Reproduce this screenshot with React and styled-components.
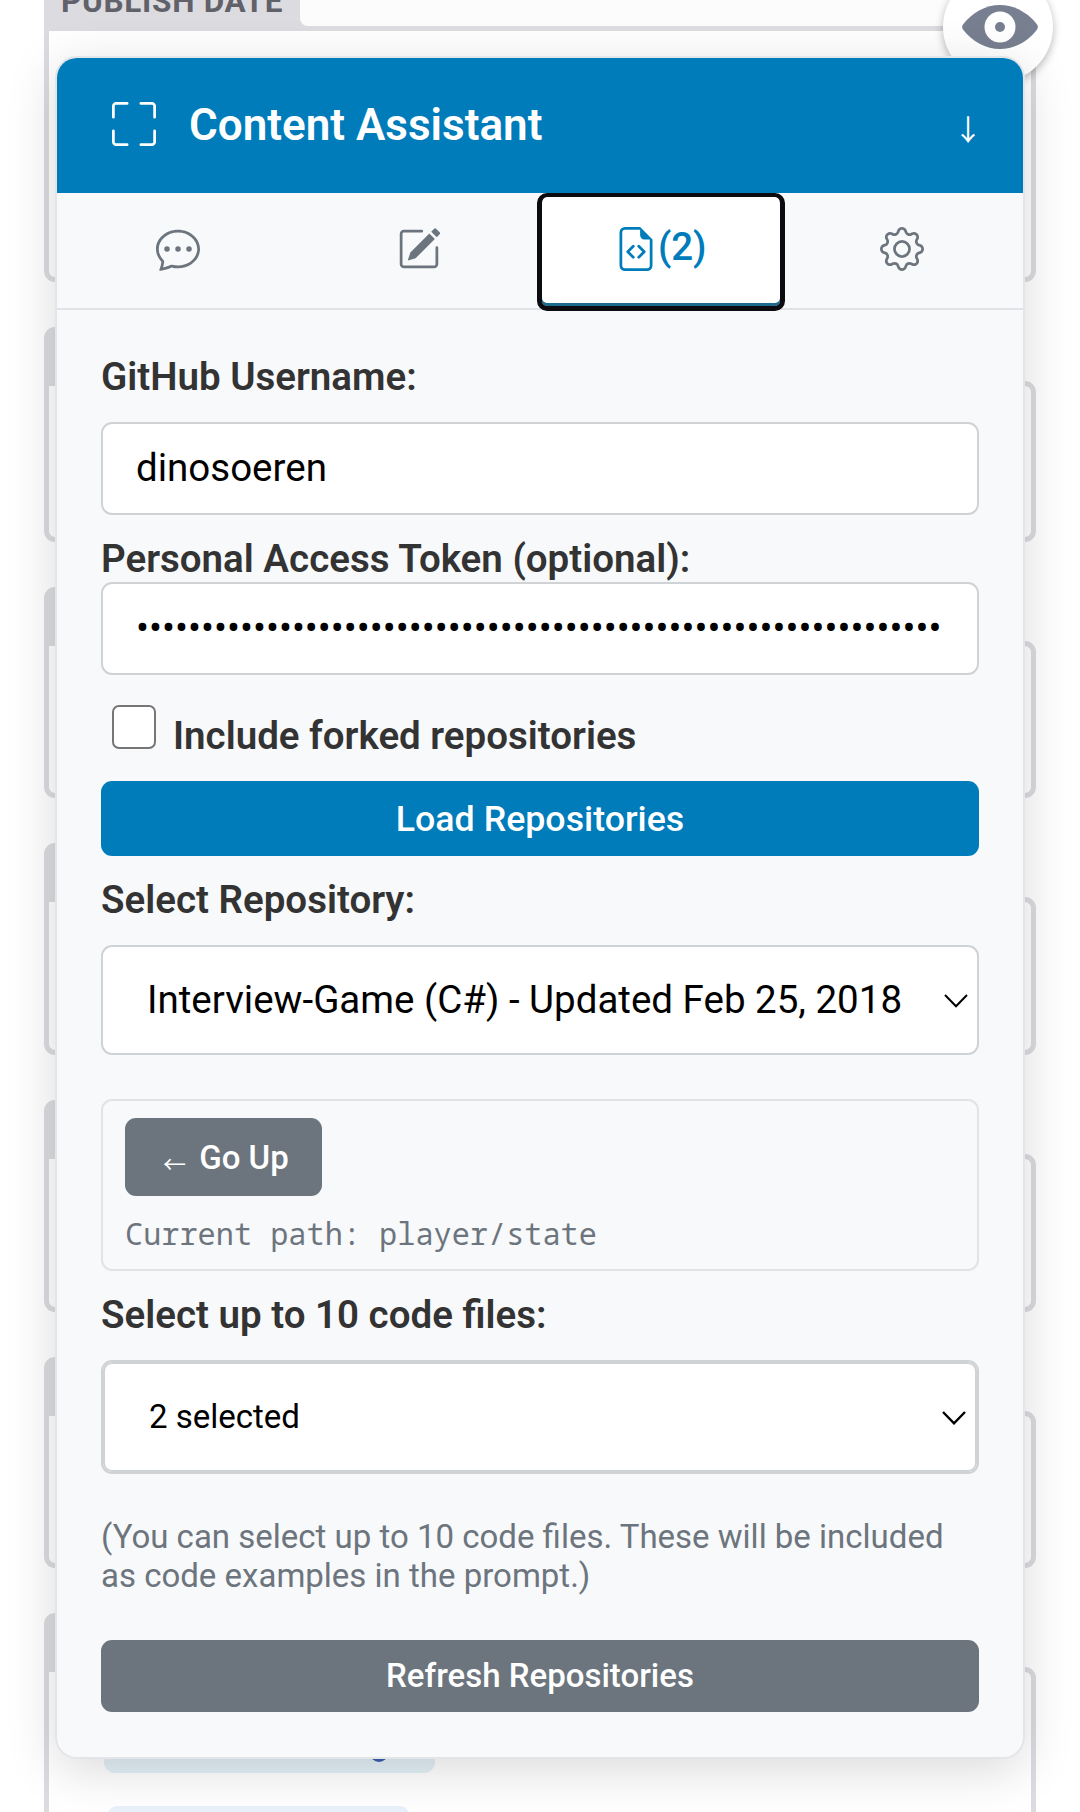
import React from "react";
import styled, { createGlobalStyle, css } from "styled-components";
import {
  BsChatDots,
  BsFileEarmarkCode,
  BsFullscreen,
  BsGear,
  BsPencilSquare,
} from "react-icons/bs";

const colors = {
  primary: "#007cba",
  secondary: "#6c757d",
  panel: "#f8f9fb",
  text: "#333333",
  border: "#d0d3d5",
  softBorder: "#e1e3e6",
  field: "#dcdce0",
};

const GlobalStyle = createGlobalStyle`
  *, *::before, *::after { box-sizing: border-box; }
  body {
    margin: 0;
    background: #fff;
    font-family: Roboto, "Liberation Sans", sans-serif;
    overflow: hidden;
  }
`;

const Page = styled.main`
  position: relative;
  width: 1080px;
  height: 1812px;
  overflow: hidden;
`;

/* Form behind the assistant */

const FormColumn = styled.div`
  display: flex;
  flex-direction: column;
  gap: 45px;
  padding: 0 44px;
`;

const Field = styled.section`
  display: flex;
  flex-direction: column;
`;

const FieldTab = styled.div`
  width: 260px;
  height: 54px;
  background: ${colors.field};
  border-radius: 11px 11px 0 0;
`;

const FieldBox = styled.div`
  height: ${(p) => p.$height}px;
  border: 5px solid ${colors.field};
  border-radius: ${(p) => (p.$open ? "0 0 11px 11px" : "0 11px 11px 11px")};
  border-top-width: ${(p) => (p.$open ? "0" : "5px")};
  background: #fff;
`;

const DateRow = styled.div`
  display: flex;
  height: 31px;
  margin: 0 -5px;
  border-bottom: 5px solid ${colors.field};
  background: ${colors.field};
`;

const DateLabel = styled.span`
  width: 256px;
  padding-left: 17px;
  font-size: 31.5px;
  line-height: 36px;
  font-weight: 700;
  letter-spacing: 0.72px;
  color: #61616a;
  white-space: nowrap;
  margin-top: -16px;
`;

const DateValue = styled.div`
  flex: 1;
  margin-right: 5px;
  background: #fcfcfd;
  border-bottom-left-radius: 8px;
`;

const TagList = styled.div`
  display: flex;
  flex-direction: column;
  align-items: flex-start;
  gap: 33px;
  padding: 23px 55px 0;
`;

const Tag = styled.div`
  display: flex;
  align-items: flex-end;
  width: ${(p) => p.$width}px;
  height: 78px;
  margin-left: ${(p) => p.$indent || 0}px;
  padding: 0 0 11px 266px;
  border-radius: 11px;
  background: ${(p) => p.$tone};
`;

const TagMark = styled.span`
  width: 18px;
  height: 14px;
  border-radius: 0 0 9px 9px;
  background: #3b61ad;
`;

const EyeButton = styled.button`
  position: absolute;
  left: 943px;
  top: -28px;
  display: flex;
  align-items: center;
  justify-content: center;
  width: 110px;
  height: 110px;
  padding: 0 0 0 3px;
  border: 0;
  border-radius: 50%;
  background: #fff;
  box-shadow: 0 3px 9px rgba(0, 0, 0, 0.28);
`;

/* Assistant panel */

const Panel = styled.div`
  position: absolute;
  left: 55px;
  top: 56px;
  width: 970px;
  height: 1703px;
  border: 2px solid #e3e5e8;
  border-radius: 22px;
  background: ${colors.panel};
  box-shadow: 0 11px 50px rgba(0, 0, 0, 0.15);
  overflow: hidden;
`;

const Header = styled.header`
  display: flex;
  align-items: center;
  height: 135px;
  padding: 0 36px 0 55px;
  background: ${colors.primary};
  color: #fff;

  svg {
    margin-bottom: 3px;
  }
`;

const Title = styled.h1`
  flex: 1;
  margin: 0 0 1px 33px;
  font-size: 44px;
  line-height: 52px;
  font-weight: 600;
`;

const Tabs = styled.nav`
  display: grid;
  grid-template-columns: repeat(4, 1fr);
  height: 117px;
  border-bottom: 2px solid ${colors.softBorder};
`;

const Tab = styled.button`
  display: flex;
  align-items: center;
  justify-content: center;
  padding: 0 0 7px;
  border: 0;
  background: transparent;
  color: ${colors.secondary};
  font: 500 38.5px Roboto, sans-serif;

  ${(p) =>
    p.$active &&
    css`
      height: 118px;
      margin: 0 -3px;
      padding: 0 1px 6px 0;
      color: ${colors.primary};
      background: #fff;
      border: 5px solid #0c0c10;
      border-top-width: 4px;
      border-radius: 10px;
      box-shadow: inset 0 -3px 0 #1c6a8e;
      z-index: 1;
    `}
`;

const Count = styled.span`
  margin: -5px 0 0;
`;

const Body = styled.div`
  display: flex;
  flex-direction: column;
  align-items: stretch;
  padding: 44px 44px 0;
`;

const Label = styled.label`
  margin-top: ${(p) => p.$top || 0}px;
  font-size: 38.5px;
  line-height: 46px;
  font-weight: 600;
  color: ${colors.text};
  white-space: nowrap;
`;

const Control = styled.div`
  display: flex;
  align-items: center;
  height: ${(p) => p.$height}px;
  margin-top: ${(p) => p.$top}px;
  padding: ${(p) => p.$pad || "0 31px 2px 33px"};
  border: 2px solid ${colors.border};
  border-radius: 11px;
  background: #fff;
  color: #000;
  font-size: ${(p) => p.$size || 38.5}px;
  white-space: nowrap;
  box-shadow: ${(p) => (p.$double ? `inset 0 0 0 2px ${colors.border}` : "none")};

  svg {
    margin: 3px 0 0 auto;
  }
`;

const CheckRow = styled.div`
  display: flex;
  align-items: flex-start;
  gap: 17px;
  margin-top: 30px;
  padding-left: 11px;
`;

const Checkbox = styled.span`
  width: 44px;
  height: 44px;
  border: 2.75px solid #767676;
  border-radius: 7px;
  background: #fff;
`;

const Button = styled.button`
  height: ${(p) => p.$height}px;
  margin-top: ${(p) => p.$top || 0}px;
  padding: ${(p) => (p.$primary ? "0 33px" : "0 33px 2px")};
  border: 0;
  border-radius: 11px;
  background: ${(p) => (p.$primary ? colors.primary : colors.secondary)};
  color: #fff;
  font: 500 ${(p) => p.$size}px Roboto, sans-serif;
  white-space: pre;
`;

const GoUpButton = styled(Button)`
  display: flex;
  align-items: center;
  width: 197px;
  padding-bottom: 0;
`;

const Arrow = styled.span`
  width: ${(p) => p.$width}px;
  margin-top: ${(p) => p.$drop}px;
  text-align: center;
  font-family: "Noto Sans CJK JP", sans-serif;
  font-weight: 400;
  font-size: ${(p) => p.$size}px;
  line-height: 1;
`;

const PathBox = styled.div`
  display: flex;
  flex-direction: column;
  align-items: flex-start;
  height: 172px;
  margin-top: 44px;
  padding: 17px 22px 0;
  border: 2px solid ${colors.softBorder};
  border-radius: 11px;
`;

const PathText = styled.div`
  margin-top: 20px;
  font-family: "Noto Sans Mono", "DejaVu Sans Mono", monospace;
  font-size: 30.25px;
  line-height: 36px;
  color: ${colors.secondary};
  white-space: nowrap;
`;

const Note = styled.p`
  margin: 44px 0 0;
  font-size: 33px;
  line-height: 38.7px;
  color: ${colors.secondary};
`;

function Chevron({ weight }) {
  return (
    <svg width="24" height="14" viewBox="0 0 24 14" fill="none" stroke="#000" strokeWidth={weight}>
      <path d="M1 1L12 12.3L23 1" />
    </svg>
  );
}

function Eye() {
  return (
    <svg width="78" height="46" viewBox="0 0 78 46">
      <path
        d="M2 20.5C11 8.500 25 1 39 1S67 8.500 76 20.500Q77.800 23 76 25.500C67 37.500 53 45 39 45S11 37.500 2 25.500Q0.200 23 2 20.500Z"
        fill="#777f90"
      />
      <circle cx="39" cy="23" r="15.500" fill="#fff" />
      <circle cx="39" cy="23" r="5" fill="#777f90" />
    </svg>
  );
}

const fieldHeights = [161, 157, 158, 158, 157];

export default function App() {
  return (
    <>
      <GlobalStyle />
      <Page>
        <FormColumn>
          <Field>
            <FieldBox $height={282} $open>
              <DateRow>
                <DateLabel>PUBLISH DATE</DateLabel>
                <DateValue />
              </DateRow>
            </FieldBox>
          </Field>
          {fieldHeights.map((height, i) => (
            <Field key={i}>
              <FieldTab />
              <FieldBox $height={height} />
            </Field>
          ))}
          <Field>
            <FieldTab />
            <FieldBox $height={220}>
              <TagList>
                <Tag $width={331} $tone="#e4f1f8">
                  <TagMark />
                </Tag>
                <Tag $width={303} $indent={3} $tone="#e8f1fb" />
              </TagList>
            </FieldBox>
          </Field>
        </FormColumn>

        <EyeButton aria-label="Preview">
          <Eye />
        </EyeButton>

        <Panel>
          <Header>
            <BsFullscreen size={44} />
            <Title>Content Assistant</Title>
            <Arrow $size={29} $width={38} $drop={6}>↓</Arrow>
          </Header>
          <Tabs>
            <Tab>
              <BsChatDots size={44} />
            </Tab>
            <Tab>
              <BsPencilSquare size={44} />
            </Tab>
            <Tab $active>
              <BsFileEarmarkCode size={44} />
              <Count>(2)</Count>
            </Tab>
            <Tab>
              <BsGear size={44} />
            </Tab>
          </Tabs>
          <Body>
            <Label>GitHub Username:</Label>
            <Control $height={93} $top={22}>dinosoeren</Control>
            <Label $top={21}>Personal Access Token (optional):</Label>
            <Control $height={93} $top={0}>{"•".repeat(62)}</Control>
            <CheckRow>
              <Checkbox />
              <Label $top={8}>Include forked repositories</Label>
            </CheckRow>
            <Button $primary $height={75} $top={22} $size={35.75}>Load Repositories</Button>
            <Label $top={21}>Select Repository:</Label>
            <Control $height={110} $top={22} $pad="0 9px 2px 44px">
              Interview-Game (C#) - Updated Feb 25, 2018
              <Chevron weight={2} />
            </Control>
            <PathBox>
              <GoUpButton $height={78} $size={33}>
                <Arrow $size={23} $width={33} $drop={12}>←</Arrow> Go Up
              </GoUpButton>
              <PathText>Current path: player/state</PathText>
            </PathBox>
            <Label $top={21}>Select up to 10 code files:</Label>
            <Control $double $height={114} $top={22} $size={33} $pad="0 11px 2px 46px">
              2 selected
              <Chevron weight={2.4} />
            </Control>
            <Note>
              (You can select up to 10 code files. These will be included as code examples in the
              prompt.)
            </Note>
            <Button $height={72} $top={45} $size={33}>Refresh Repositories</Button>
          </Body>
        </Panel>
      </Page>
    </>
  );
}
